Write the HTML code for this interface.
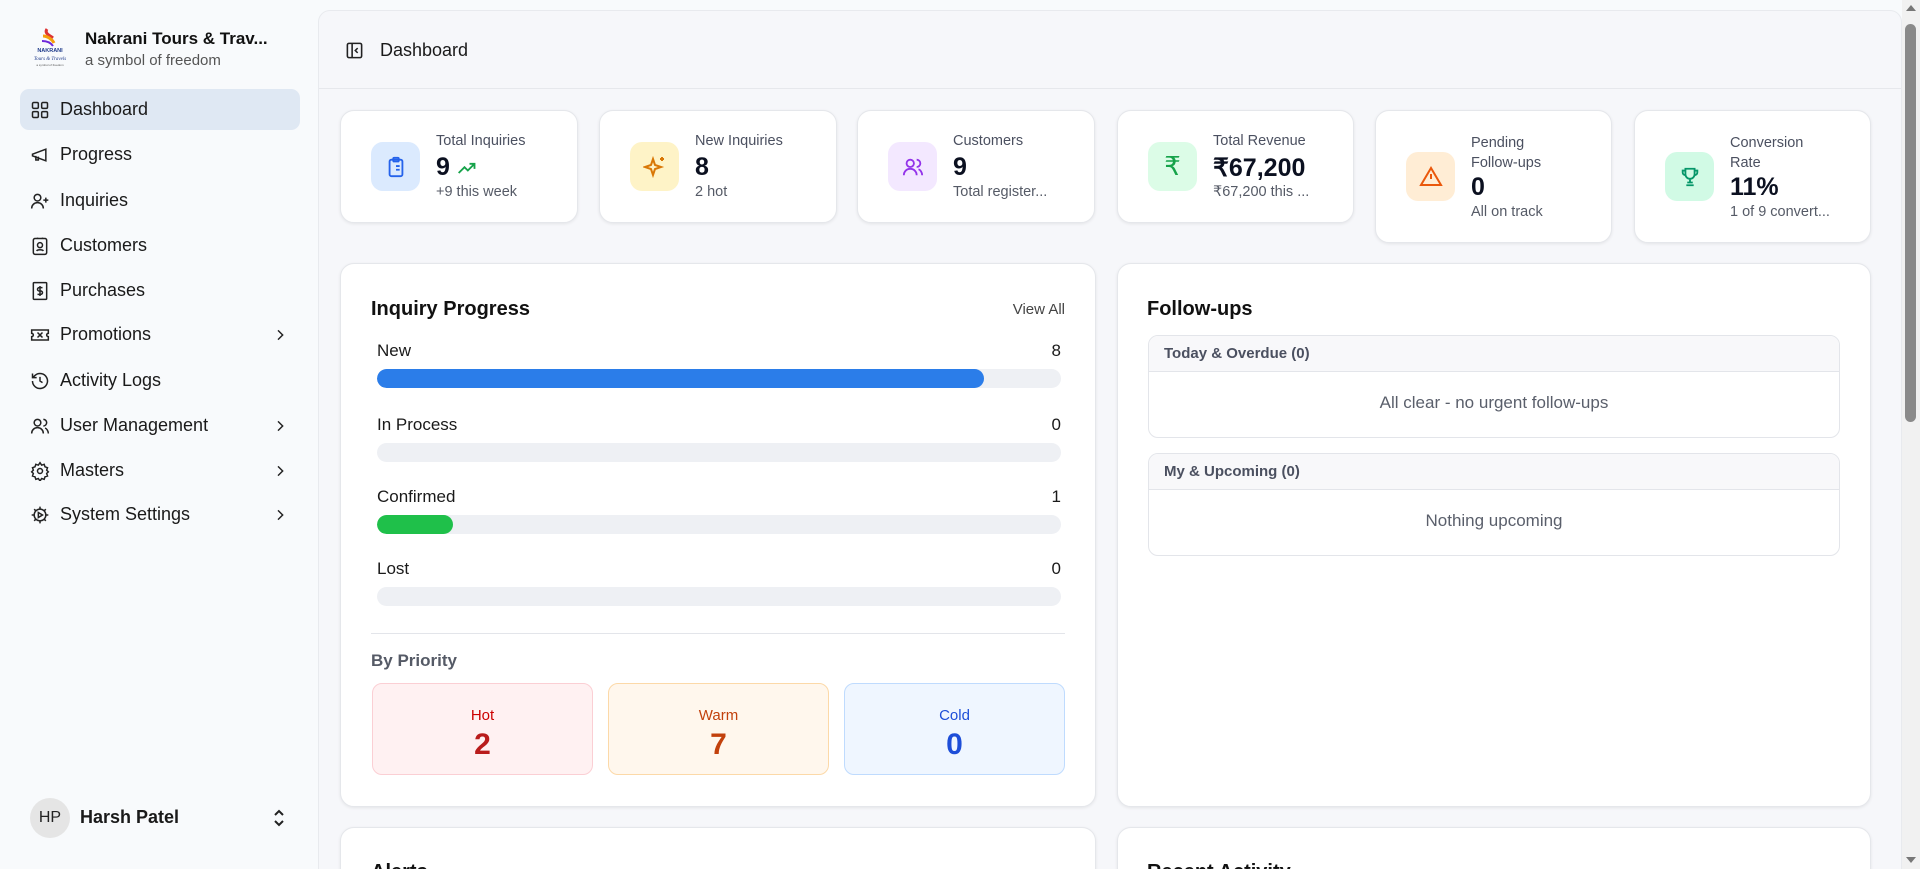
<!DOCTYPE html>
<html style="width:1920px;height:869px;overflow:hidden"><head><meta charset="utf-8"><style>
*{box-sizing:border-box;margin:0;padding:0}
body{width:1920px;height:869px;overflow:hidden;background:#f8fafc;font-family:"Liberation Sans",sans-serif;color:#0f172a;position:relative}
#wrap{position:absolute;left:0;top:0;width:1920px;height:869px;overflow:hidden}
.side{position:absolute;left:0;top:0;width:318px;height:869px;background:#f8fafc}
.logo{position:absolute;left:29px;top:27px;width:42px;height:44px}
.brand{position:absolute;left:85px;top:29px;font-size:17px;font-weight:bold;color:#111}
.sub{position:absolute;left:85px;top:52px;font-size:15px;color:#555}
.nav{position:absolute;left:20px;width:280px;height:41px;border-radius:9px;display:flex;align-items:center;font-size:18px;color:#1a1a1a}
.nav svg{position:absolute;left:10px;width:20px;height:20px}
.nav span{position:absolute;left:40px}
.nav .chev{position:absolute;left:252px;width:16px;height:16px}
.active{background:#dfe8f3}
.main{position:absolute;left:318px;top:10px;width:1584px;height:900px;background:#f6f7fa;border:1px solid #e8eaee;border-radius:12px}
.hdr{position:absolute;left:0;top:0;right:0;height:78px;border-bottom:1px solid #e6e8ec}
.card{position:absolute;background:#fff;border:1px solid #e5e7eb;border-radius:14px;box-shadow:0 1px 3px rgba(0,0,0,.08)}
.stat .ib{position:absolute;left:30px;top:31px;width:49px;height:49px;border-radius:12px;display:flex;align-items:center;justify-content:center}
.stat .l{position:absolute;left:95px;font-size:14.5px;color:#4b5060}
.stat .v{position:absolute;left:95px;font-size:25px;font-weight:bold;color:#0b1020}
.stat .s{position:absolute;left:95px;font-size:14.5px;color:#555a66;white-space:nowrap}
.ttl{position:absolute;font-size:20px;font-weight:bold;color:#111}
.rl{position:absolute;left:36px;font-size:17px;color:#1a1a1a}
.rv{position:absolute;right:34px;font-size:17px;color:#1a1a1a}
.bar{position:absolute;left:36px;width:684px;height:19px;background:#eef0f4;border-radius:10px;overflow:hidden}
.bar i{display:block;height:100%;border-radius:10px}
.pb{position:absolute;top:419px;width:221px;height:92px;border-radius:10px;text-align:center}
.pb .a{margin-top:23px;font-size:15px}
.pb .b{font-size:30px;font-weight:bold;margin-top:4px}
.fb{position:absolute;left:30px;width:692px;border:1px solid #e3e5ea;border-radius:10px;overflow:hidden}
.fb .h{height:36px;background:#f8f8fa;border-bottom:1px solid #e3e5ea;font-size:15px;font-weight:bold;color:#4b5060;padding:9px 0 0 15px}
.fb .c{height:65px;text-align:center;font-size:17px;color:#5a5f6b;padding-top:21px}
</style></head><body><div id="wrap">
<div class="side">
 <svg class="logo" viewBox="0 0 42 44"><path d="M18 2c-3 4 2 6 6 9" stroke="#d33" stroke-width="3" fill="none"/><path d="M14 9c4 0 9 3 11 7" stroke="#f59e0b" stroke-width="3" fill="none"/><path d="M13 14c5 0 9 2 11 5" stroke="#6d28d9" stroke-width="2" fill="none"/><text x="21" y="25" font-size="5.5" text-anchor="middle" fill="#1e3a8a" font-weight="bold" font-family="Liberation Sans">NAKRANI</text><text x="21" y="33" font-size="5" text-anchor="middle" fill="#1e3a8a" font-style="italic" font-family="Liberation Serif">Tours &amp; Travels</text><text x="21" y="39" font-size="3" text-anchor="middle" fill="#555" font-family="Liberation Sans">a symbol of freedom</text></svg>
 <div class="brand">Nakrani Tours &amp; Trav...</div>
 <div class="sub">a symbol of freedom</div>
 <div class="nav active" style="top:89px"><svg viewBox="0 0 24 24" fill="none" stroke="#222" stroke-width="1.8"><rect x="3" y="3" width="7" height="7" rx="1.5"/><rect x="14" y="3" width="7" height="7" rx="1.5"/><rect x="3" y="14" width="7" height="7" rx="1.5"/><rect x="14" y="14" width="7" height="7" rx="1.5"/></svg><span>Dashboard</span></div>
 <div class="nav" style="top:134px"><svg viewBox="0 0 24 24" fill="none" stroke="#222" stroke-width="1.8"><path d="M3 11l16-6v14L3 13z M7 13v5h3v-4"/></svg><span>Progress</span></div>
 <div class="nav" style="top:180px"><svg viewBox="0 0 24 24" fill="none" stroke="#222" stroke-width="1.8"><circle cx="9" cy="8" r="4"/><path d="M2 21c0-4 3-7 7-7s7 3 7 7M19 8v6M16 11h6"/></svg><span>Inquiries</span></div>
 <div class="nav" style="top:225px"><svg viewBox="0 0 24 24" fill="none" stroke="#222" stroke-width="1.8"><rect x="4" y="3" width="16" height="19" rx="2"/><circle cx="12" cy="11" r="3"/><path d="M8 18c1-2 7-2 8 0M9 3v-1M15 3v-1"/></svg><span>Customers</span></div>
 <div class="nav" style="top:270px"><svg viewBox="0 0 24 24" fill="none" stroke="#222" stroke-width="1.8"><rect x="4" y="2" width="16" height="20" rx="1"/><path d="M15 8h-4a2 2 0 000 4h2a2 2 0 010 4H9M12 6v12"/></svg><span>Purchases</span></div>
 <div class="nav" style="top:314px"><svg viewBox="0 0 24 24" fill="none" stroke="#222" stroke-width="1.8"><path d="M2 6h20v4a2 2 0 000 4v4H2v-4a2 2 0 000-4z M9 9l6 6M15 9l-6 6"/></svg><span>Promotions</span><svg class="chev" viewBox="0 0 24 24" fill="none" stroke="#222" stroke-width="2.2"><path d="M9 5l7 7-7 7"/></svg></div>
 <div class="nav" style="top:360px"><svg viewBox="0 0 24 24" fill="none" stroke="#222" stroke-width="1.8"><path d="M3 12a9 9 0 103-6.7L3 8M3 3v5h5M12 7v5l3 2"/></svg><span>Activity Logs</span></div>
 <div class="nav" style="top:405px"><svg viewBox="0 0 24 24" fill="none" stroke="#222" stroke-width="1.8"><circle cx="9" cy="8" r="4"/><path d="M2 21c0-4 3-7 7-7s7 3 7 7M16 4a4 4 0 010 8M22 21c0-3-2-6-4-6.5"/></svg><span>User Management</span><svg class="chev" viewBox="0 0 24 24" fill="none" stroke="#222" stroke-width="2.2"><path d="M9 5l7 7-7 7"/></svg></div>
 <div class="nav" style="top:450px"><svg viewBox="0 0 24 24" fill="none" stroke="#222" stroke-width="1.8"><circle cx="12" cy="12" r="3"/><path d="M12 2l2 3 3-1 1 3 3 1-1 3 2 2-2 2 1 3-3 1-1 3-3-1-2 3-2-3-3 1-1-3-3-1 1-3-2-2 2-2-1-3 3-1 1-3 3 1z"/></svg><span>Masters</span><svg class="chev" viewBox="0 0 24 24" fill="none" stroke="#222" stroke-width="2.2"><path d="M9 5l7 7-7 7"/></svg></div>
 <div class="nav" style="top:494px"><svg viewBox="0 0 24 24" fill="none" stroke="#222" stroke-width="1.8"><circle cx="12" cy="12" r="7"/><path d="M10 9l5 3-5 3z M12 2v3M12 19v3M2 12h3M19 12h3M5 5l2 2M17 17l2 2M5 19l2-2M17 7l2-2"/></svg><span>System Settings</span><svg class="chev" viewBox="0 0 24 24" fill="none" stroke="#222" stroke-width="2.2"><path d="M9 5l7 7-7 7"/></svg></div>
 <div style="position:absolute;left:30px;top:798px;width:40px;height:40px;border-radius:50%;background:#e5e5e5;font-size:16px;text-align:center;line-height:40px;color:#222">HP</div>
 <div style="position:absolute;left:80px;top:807px;font-size:18px;font-weight:bold;color:#1a1a1a">Harsh Patel</div>
 <svg style="position:absolute;left:271px;top:809px" width="16" height="18" viewBox="0 0 16 18" fill="none" stroke="#222" stroke-width="2"><path d="M4 6l4-4 4 4M4 12l4 4 4-4"/></svg>
</div>
<div class="main">
 <div class="hdr">
  <svg style="position:absolute;left:26px;top:30px" width="19" height="19" viewBox="0 0 24 24" fill="none" stroke="#222" stroke-width="2"><rect x="3" y="3" width="18" height="18" rx="2"/><path d="M9 3v18M16 9l-3 3 3 3"/></svg>
  <div style="position:absolute;left:61px;top:29px;font-size:18px;color:#1a1a1a">Dashboard</div>
 </div>
</div>
<div class="card stat" style="left:340px;top:110px;width:238px;height:113px"><div class="ib" style="background:#dbeafe"><svg width="22" height="22" viewBox="0 0 24 24" fill="none" stroke="#2563eb" stroke-width="2"><rect x="5" y="4" width="14" height="18" rx="2"/><rect x="9" y="2" width="6" height="4" rx="1"/><path d="M9 11h.01M12 11h4M9 15h.01M12 15h4"/></svg></div><div class="l" style="top:22px">Total Inquiries</div><div class="v" style="top:42px">9 <svg width="20" height="14" viewBox="0 0 24 16" fill="none" stroke="#16a34a" stroke-width="2.2"><path d="M2 14l7-7 4 4 8-8M15 3h6v6"/></svg></div><div class="s" style="top:73px">+9 this week</div></div>
<div class="card stat" style="left:599px;top:110px;width:238px;height:113px"><div class="ib" style="background:#fef3c7"><svg width="24" height="24" viewBox="0 0 24 24" fill="none" stroke="#d97706" stroke-width="2"><path d="M10 4l2 6 6 2-6 2-2 6-2-6-6-2 6-2z M19 2v4M17 4h4"/></svg></div><div class="l" style="top:22px">New Inquiries</div><div class="v" style="top:42px">8</div><div class="s" style="top:73px">2 hot</div></div>
<div class="card stat" style="left:857px;top:110px;width:238px;height:113px"><div class="ib" style="background:#f3e8ff"><svg width="22" height="22" viewBox="0 0 24 24" fill="none" stroke="#9333ea" stroke-width="2"><circle cx="9" cy="8" r="4"/><path d="M2 21c0-4 3-7 7-7s7 3 7 7M16 4a4 4 0 010 8M22 21c0-3-2-6-4-6.5"/></svg></div><div class="l" style="top:22px">Customers</div><div class="v" style="top:42px">9</div><div class="s" style="top:73px">Total register...</div></div>
<div class="card stat" style="left:1117px;top:110px;width:237px;height:113px"><div class="ib" style="background:#dcfce7;color:#16a34a;font-size:26px">₹</div><div class="l" style="top:22px">Total Revenue</div><div class="v" style="top:42px">₹67,200</div><div class="s" style="top:73px">₹67,200 this ...</div></div>
<div class="card stat" style="left:1375px;top:110px;width:237px;height:133px"><div class="ib" style="background:#ffedd5;top:41px"><svg width="24" height="24" viewBox="0 0 24 24" fill="none" stroke="#ea580c" stroke-width="2"><path d="M12 3L2 20h20z M12 9v5M12 17h.01"/></svg></div><div class="l" style="top:22px;line-height:20px">Pending<br>Follow-ups</div><div class="v" style="top:62px">0</div><div class="s" style="top:93px">All on track</div></div>
<div class="card stat" style="left:1634px;top:110px;width:237px;height:133px"><div class="ib" style="background:#d1fae5;top:41px"><svg width="22" height="22" viewBox="0 0 24 24" fill="none" stroke="#059669" stroke-width="2"><path d="M7 3h10v6a5 5 0 01-10 0z M7 5H4v2a3 3 0 003 3M17 5h3v2a3 3 0 01-3 3M12 14v4M8 21h8M9 18h6"/></svg></div><div class="l" style="top:22px;line-height:20px">Conversion<br>Rate</div><div class="v" style="top:62px">11%</div><div class="s" style="top:93px">1 of 9 convert...</div></div>
<div class="card" style="left:340px;top:263px;width:756px;height:544px">
 <div class="ttl" style="left:30px;top:34px">Inquiry Progress</div>
 <div style="position:absolute;right:30px;top:37px;font-size:15px;color:#444">View All</div>
 <div class="rl" style="top:77px">New</div><div class="rv" style="top:77px">8</div><div class="bar" style="top:105px"><i style="width:607px;background:#2b7de9"></i></div>
 <div class="rl" style="top:151px">In Process</div><div class="rv" style="top:151px">0</div><div class="bar" style="top:179px"></div>
 <div class="rl" style="top:223px">Confirmed</div><div class="rv" style="top:223px">1</div><div class="bar" style="top:251px"><i style="width:76px;background:#1fc04a"></i></div>
 <div class="rl" style="top:295px">Lost</div><div class="rv" style="top:295px">0</div><div class="bar" style="top:323px"></div>
 <div style="position:absolute;left:30px;right:30px;top:369px;border-top:1px solid #e3e5ea"></div>
 <div style="position:absolute;left:30px;top:387px;font-size:17px;font-weight:bold;color:#555a66">By Priority</div>
 <div class="pb" style="left:31px;background:#fff1f2;border:1px solid #fbcfd4"><div class="a" style="color:#c00">Hot</div><div class="b" style="color:#b91c1c">2</div></div>
 <div class="pb" style="left:267px;background:#fff7ed;border:1px solid #fcd9a8"><div class="a" style="color:#c2410c">Warm</div><div class="b" style="color:#c2410c">7</div></div>
 <div class="pb" style="left:503px;background:#eff6ff;border:1px solid #bfdbfe"><div class="a" style="color:#1d4ed8">Cold</div><div class="b" style="color:#1d4ed8">0</div></div>
</div>
<div class="card" style="left:1117px;top:263px;width:754px;height:544px">
 <div class="ttl" style="left:29px;top:34px">Follow-ups</div>
 <div class="fb" style="top:71px"><div class="h">Today &amp; Overdue (0)</div><div class="c">All clear - no urgent follow-ups</div></div>
 <div class="fb" style="top:189px"><div class="h">My &amp; Upcoming (0)</div><div class="c">Nothing upcoming</div></div>
</div>
<div class="card" style="left:340px;top:827px;width:756px;height:80px"><div class="ttl" style="left:30px;top:33px">Alerts</div></div>
<div class="card" style="left:1117px;top:827px;width:754px;height:80px"><div class="ttl" style="left:29px;top:33px">Recent Activity</div></div>
<div style="position:absolute;left:1902px;top:0;width:18px;height:869px;background:#f1f1f1"></div>
<div style="position:absolute;left:1905px;top:24px;width:11px;height:398px;background:#8a8a8a;border-radius:6px"></div>
<div style="position:absolute;left:1906px;top:5px;width:0;height:0;border-left:5px solid transparent;border-right:5px solid transparent;border-bottom:6px solid #777"></div>
<div style="position:absolute;left:1906px;top:857px;width:0;height:0;border-left:5px solid transparent;border-right:5px solid transparent;border-top:6px solid #777"></div>
</div></body></html>
